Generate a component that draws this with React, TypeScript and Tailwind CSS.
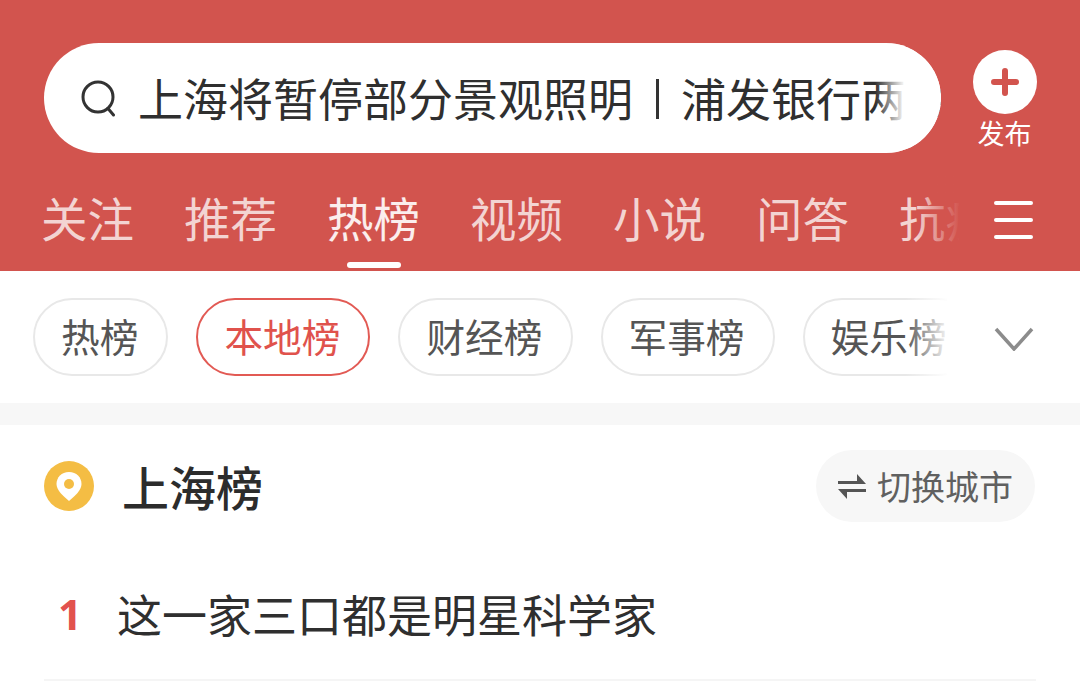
import React from "react";

const cjk = { fontFamily: '"Noto Sans CJK SC", "Noto Sans", sans-serif' };

const tabs = ["关注", "推荐", "热榜", "视频", "小说", "问答", "抗疫"];
const pills = ["热榜", "本地榜", "财经榜", "军事榜", "娱乐榜"];

export default function App() {
  return (
    <div className="w-[1080px] h-[699px] overflow-hidden bg-white flex flex-col" style={cjk}>
      <header className="h-[271px] shrink-0 bg-[#d2544e] flex flex-col">
        <div className="h-[176px] shrink-0 flex pl-[44px] pt-[43px]">
          <div className="relative w-[897px] h-[110px] rounded-full bg-white flex items-center pl-[36px] overflow-hidden">
            <svg width="38" height="38" viewBox="0 0 38 38" fill="none" stroke="#333333" strokeWidth="3" strokeLinecap="round" className="shrink-0 -mt-[1px]">
              <circle cx="18" cy="18" r="15" />
              <path d="M28 29.5 L33.5 36" />
            </svg>
            <span className="ml-[20px] -mt-[1px] text-[45px] leading-[60px] text-[#2f2f2f] whitespace-nowrap">上海将暂停部分景观照明</span>
            <span className="ml-[23px] mt-[1px] w-[3px] h-[40px] shrink-0 bg-[#333333]" />
            <span className="ml-[22px] -mt-[1px] text-[45px] leading-[60px] text-[#2f2f2f] whitespace-nowrap">浦发银行两会</span>
            <div className="absolute right-0 top-0 h-full w-[36px] bg-white" />
            <div className="absolute right-[36px] top-0 h-full w-[30px] bg-gradient-to-r from-transparent to-white" />
          </div>
          <div className="ml-[32px] w-[64px] flex flex-col items-center">
            <div className="relative mt-[7px] w-[64px] h-[64px] rounded-full bg-white flex items-center justify-center">
              <svg width="28" height="28" viewBox="0 0 28 28" fill="none" stroke="#d2544e" strokeWidth="6" strokeLinecap="round">
                <path d="M14 3 V25 M3 14 H25" />
              </svg>
            </div>
            <span className="-mt-[1px] -ml-[1px] text-[27px] leading-[40px] text-white whitespace-nowrap">发布</span>
          </div>
        </div>
        <div className="relative flex-1 flex pl-[41px]">
          <div className="w-[918px] pt-[10px] overflow-hidden flex gap-[51px]">
            {tabs.map((t, i) => (
              <div key={t} className="relative shrink-0 w-[93px] -mr-[1px] h-[85px]">
                <span className={`block text-[46.5px] leading-[62px] whitespace-nowrap ${i === 2 ? "text-white/90" : "text-white/75"}`}>{t}</span>
                {i === 2 && <div className="absolute left-[20px] bottom-[3px] w-[54px] h-[6px] rounded-full bg-white" />}
              </div>
            ))}
          </div>
          <div className="absolute left-[915px] top-0 w-[45px] h-full bg-gradient-to-r from-transparent to-[#d2544e]" />
          <div className="absolute right-[47px] top-[25px] w-[39px] h-[38px] flex flex-col justify-between">
            <div className="h-[4px] rounded-full bg-white" />
            <div className="h-[4px] rounded-full bg-white" />
            <div className="h-[4px] rounded-full bg-white" />
          </div>
        </div>
      </header>

      <div className="relative h-[132px] shrink-0 flex pl-[33px] pt-[27px]">
        <div className="flex gap-[28px] w-[914px] overflow-hidden">
          {pills.map((p, i) => (
            <div
              key={p}
              className={`shrink-0 h-[78px] pl-[26px] pr-[28px] pb-[3px] rounded-full border-2 flex items-center text-[38.7px] whitespace-nowrap ${i === 1 ? "border-[#e25a54] text-[#e0524c]" : "border-[#e8e8e8] text-[#555555]"}`}
            >
              {p}
            </div>
          ))}
        </div>
        <div className="absolute left-[905px] top-0 w-[45px] h-full bg-gradient-to-r from-transparent to-white" />
        <svg width="40" height="24" viewBox="0 0 40 24" fill="none" stroke="#8c8c8c" strokeWidth="3.5" className="absolute left-[994px] top-[56px]">
          <path d="M2 2 L20 22 L38 2" />
        </svg>
      </div>

      <div className="h-[22px] shrink-0 bg-[#f7f7f7]" />

      <div className="flex items-center justify-between h-[124px] shrink-0 pl-[44px] pr-[45px] pb-[2px]">
        <div className="flex items-center">
          <svg width="50" height="50" viewBox="0 0 50 50">
            <circle cx="25" cy="25" r="25" fill="#f4bd44" />
            <path d="M25 11 C17.5 11 12.5 16.5 12.5 23 C12.5 29 19 35 25 40 C31 35 37.5 29 37.5 23 C37.5 16.5 32.5 11 25 11 Z" fill="#ffffff" />
            <circle cx="25" cy="23" r="5" fill="#f4bd44" />
          </svg>
          <span className="ml-[28px] -mt-[1px] text-[47px] leading-[60px] font-medium text-[#2c2c2c] whitespace-nowrap">上海榜</span>
        </div>
        <div className="w-[219px] h-[72px] rounded-full bg-[#f7f7f7] flex items-center pl-[22px]">
          <svg width="28" height="27" viewBox="0 0 28 27" fill="#555555" className="shrink-0">
            <path d="M0 8 H19 V1 L28 11 H0 Z" />
            <path d="M28 16 V19 H9 V26 L0 16 Z" />
          </svg>
          <span className="ml-[11px] -mt-[1px] text-[34px] text-[#606060] whitespace-nowrap">切换城市</span>
        </div>
      </div>

      <div className="mx-[44px] h-[133px] shrink-0 -mt-[1px] border-b-2 border-[#f5f5f5] flex items-center pl-[14px]">
        <span className="w-[59px] text-[42px] font-bold text-[#e2524e] leading-[50px]" style={{ fontFamily: '"Open Sans", sans-serif' }}>1</span>
        <span className="text-[45px] leading-[60px] text-[#2f2f2f] whitespace-nowrap">这一家三口都是明星科学家</span>
      </div>
    </div>
  );
}
